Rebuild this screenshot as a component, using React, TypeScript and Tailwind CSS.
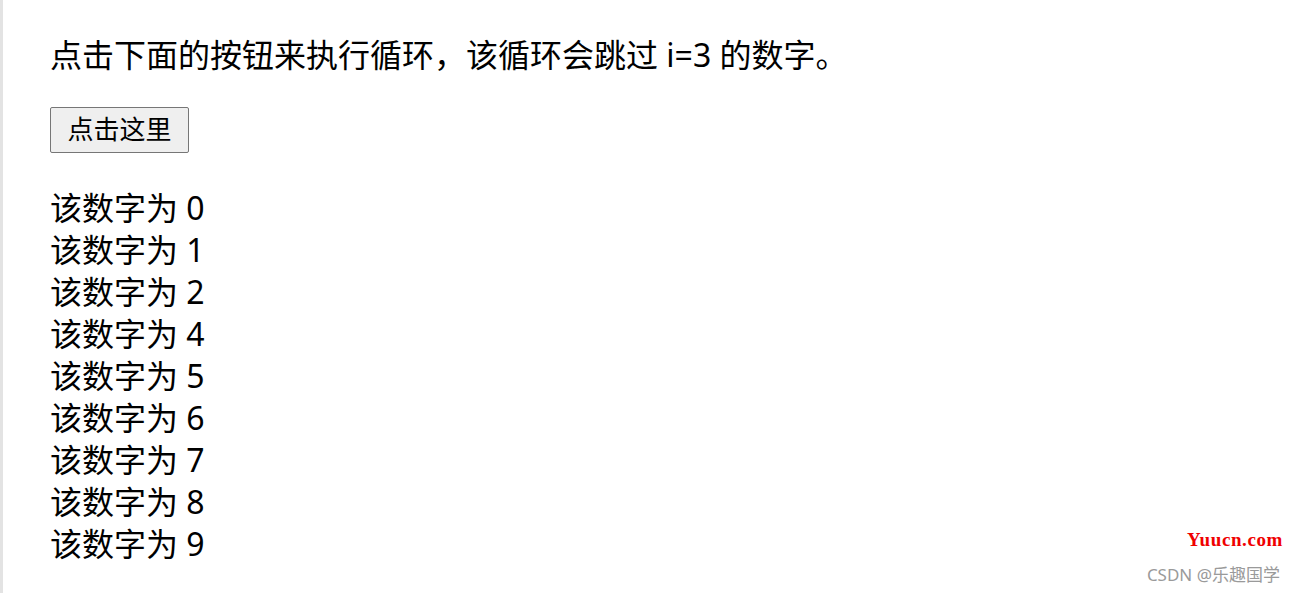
export default function App() {
  const nums = [0, 1, 2, 4, 5, 6, 7, 8, 9];
  return (
    <div
      className="relative h-[593px] overflow-hidden border-l-[3px] border-[#e3e3e3] bg-white pl-[47px] pt-[34px] text-black"
      style={{ fontFamily: '"Noto Sans", "Noto Sans CJK SC", sans-serif' }}
    >
      <p className="text-[32px] leading-[42px]">
        点击下面的按钮来执行循环，该循环会跳过 i=3 的数字。
      </p>

      <button
        type="button"
        className="mt-[31px] h-[46px] w-[139px] rounded-[2px] border border-[#767676] bg-[#efefef] pb-[2px] text-[26px] leading-none"
      >
        点击这里
      </button>

      <div className="mt-[34px] text-[32px] leading-[42px]">
        {nums.map((n) => (
          <div key={n}>该数字为 {n}</div>
        ))}
      </div>

      <span
        className="absolute right-[12px] top-[526px] text-[19px] font-semibold tracking-[0.6px] text-[#f00000]"
        style={{ fontFamily: '"Liberation Serif", serif' }}
      >
        Yuucn.com
      </span>
      <span className="absolute right-[15px] top-[562px] text-[17px] text-[#9a9a9a]">
        CSDN @乐趣国学
      </span>
    </div>
  );
}
